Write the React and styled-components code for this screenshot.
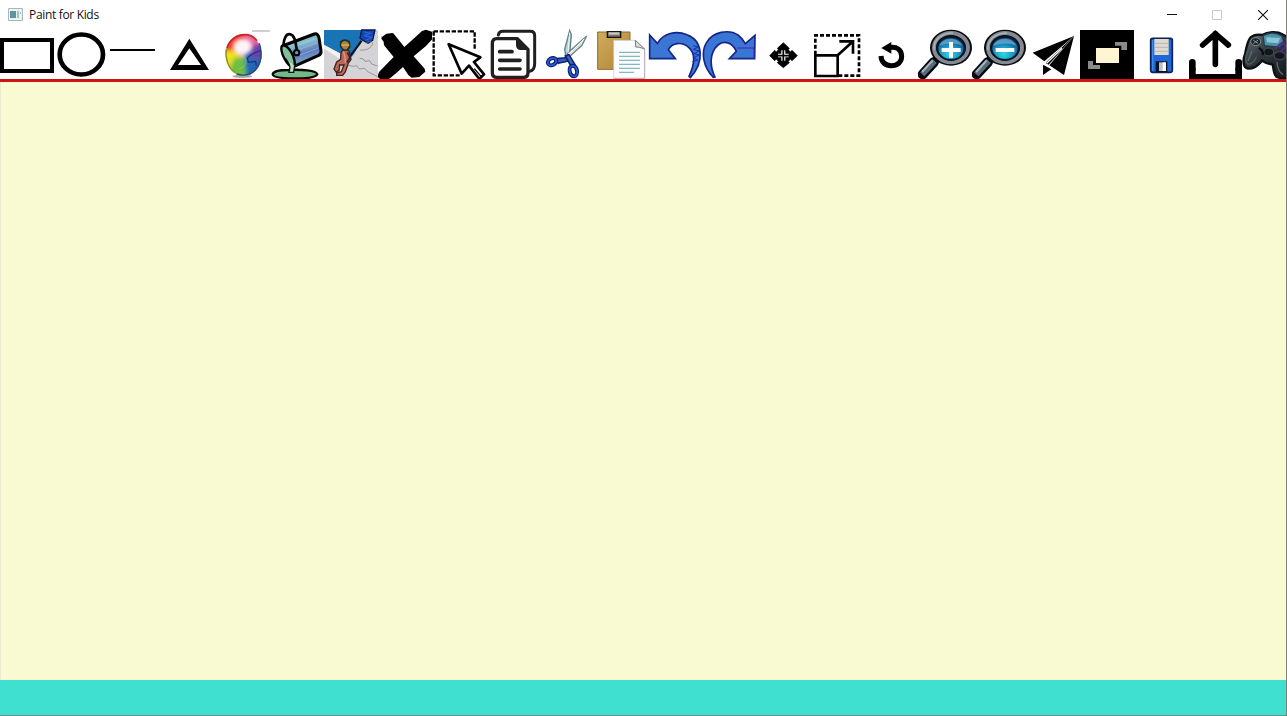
import React from "react";
import styled, { createGlobalStyle } from "styled-components";

const GlobalStyle = createGlobalStyle`
  html, body, #root { height: 100%; }
  body { margin: 0; overflow: hidden; background: #fff; }
  * { box-sizing: border-box; }
`;

const Window = styled.div`
  display: flex;
  flex-direction: column;
  width: 1287px;
  height: 716px;
  overflow: hidden;
  background: #fff;
  border-right: 1px solid #808078;
  border-bottom: 1px solid #6f8f88;
`;

const TitleBar = styled.header`
  display: flex;
  align-items: center;
  flex: none;
  height: 29px;
  padding-left: 8px;
`;

const Title = styled.h1`
  flex: 1;
  margin: 0 0 0 6px;
  font: 400 12px/28px "Open Sans", "Noto Sans", sans-serif;
  letter-spacing: -0.33px;
  color: #111;
`;

const AppIcon = styled.svg`
  width: 15px;
  height: 13px;
  flex: none;
`;

const WindowButton = styled.button`
  display: grid;
  place-items: center;
  width: ${(p) => p.$width || 45}px;
  height: 29px;
  padding: 0;
  border: 0;
  background: transparent;

  svg { display: block; }
`;

const Toolbar = styled.nav`
  display: flex;
  flex: none;
  height: 50px;
  overflow: hidden;
`;

const Tool = styled.button`
  flex: none;
  width: 54px;
  height: 50px;
  padding: 0;
  border: 0;
  background: transparent;

  svg { display: block; }
`;

const Divider = styled.div`
  flex: none;
  height: 3px;
  background: #d01414;
`;

const Canvas = styled.main`
  flex: 1;
  background: #f9f9d2;
  border-left: 1px solid #e9eccb;
`;

const StatusBar = styled.footer`
  flex: none;
  height: 35px;
  background: #40e0d0;
`;

function Magnifier({ id, plus }) {
  return (
    <>
      <defs>
        <radialGradient id={id} cx=".45" cy=".75" r=".75">
          <stop offset="0" stopColor="#2cd8e0" />
          <stop offset=".5" stopColor="#1b90c2" />
          <stop offset="1" stopColor="#12376e" />
        </radialGradient>
      </defs>
      <path d="M26 145 60 108" stroke="#070b10" strokeWidth="30" strokeLinecap="round" />
      <path d="M25 145 62 105" stroke="#596a7d" strokeWidth="17" />
      <path d="M24 138 56 103" stroke="#a7b5bf" strokeWidth="6" />
      <ellipse cx="111" cy="65" rx="63" ry="54" fill="#080c12" />
      <ellipse cx="111" cy="65" rx="51" ry="44" fill="none" stroke="#858a92" strokeWidth="12" />
      <path d="M60 72C57 39 84 21 117 21" fill="none" stroke="#adb1b8" strokeWidth="4" />
      <ellipse cx="111" cy="67" rx="41" ry="35" fill={`url(#${id})`} stroke="#0b1729" strokeWidth="6" />
      <path d="M77 59c5-22 51-32 68 0-20-9-45-8-68 0" fill="#75b9da" opacity=".65" />
      <path d={plus ? "M83 72h57M111 48v47" : "M83 72h56"} stroke="#fff" strokeWidth="12" />
    </>
  );
}

/* Glyphs are drawn on a grid of three units per pixel; x and y give the origin of each one. */
const tools = [
  {
    name: "Rectangle", x: 0, y: 87,
    art: <path fillRule="evenodd" d="M0 114h162v105H0zM12 126v81h138v-81z" />,
  },
  {
    name: "Circle", x: 162, y: 87,
    art: <ellipse cx="244" cy="163.5" rx="65" ry="60" fill="#fff" stroke="#000" strokeWidth="14" />,
  },
  {
    name: "Line", x: 324, y: 87,
    art: <path d="M330 150h135" stroke="#000" strokeWidth="6" />,
  },
  {
    name: "Triangle", x: 6, y: 9,
    art: <path fillRule="evenodd" d="M88 38 147 132H30ZM88 67 54 117h69Z" />,
  },
  {
    name: "Colours", x: 168, y: 9,
    art: (
      <>
        <defs>
          <clipPath id="ball"><ellipse cx="251" cy="87" rx="54" ry="63" /></clipPath>
          <filter id="mix" x="-.4" y="-.4" width="1.8" height="1.8"><feGaussianBlur stdDeviation="7" /></filter>
          <filter id="soft" x="-.4" y="-.4" width="1.8" height="1.8"><feGaussianBlur stdDeviation="6" /></filter>
        </defs>
        <path d="M276 15h54" stroke="#b9b5bd" strokeWidth="4" />
        <ellipse cx="247" cy="151" rx="30" ry="5" fill="#7d8a81" opacity=".7" />
        <g clipPath="url(#ball)">
          <path d="M195 20h115v135H195z" fill="#eba4c4" />
          <g filter="url(#mix)">
            <path d="M190 10h90l-10 26-35 14-20 45-30 5z" fill="#ed3a28" />
            <path d="M190 78c35-12 42 5 56 12l-18 55-41-12z" fill="#efe21c" />
            <path d="M222 96c35-10 50 12 44 60h-57c-5-23 3-39 13-60z" fill="#6cc043" />
            <path d="M253 84c28-25 60-13 64 9l-15 72h-42z" fill="#2368b5" />
            <path d="M282 40 315 48v53l-45-5z" fill="#6e3fa8" />
            <path d="M240 18h45l25 32-30 8z" fill="#e56797" />
          </g>
          <ellipse cx="246" cy="62" rx="27" ry="24" fill="#fff" opacity=".9" filter="url(#soft)" />
        </g>
        <path d="M201 66c6-24 29-40 54-40 16 0 28 8 36 18" fill="none" stroke="#d0202a" strokeWidth="5" />
        <path d="M199 68c-5 27 6 58 26 72" fill="none" stroke="#8e951c" strokeWidth="4" />
        <path d="M298 52c12 36 3 76-26 90-13 6-27 7-42 2" fill="none" stroke="#24506a" strokeWidth="4" />
        <path d="M302 73c-18 7-34 14-40 24l3 12 22-3 2 13" fill="none" stroke="#20338b" strokeWidth="4" />
        <path d="M214 112c8-20 26-27 41-17 8 12 0 29-17 33" fill="none" stroke="#bddc62" strokeWidth="2" opacity=".7" />
      </>
    ),
  },
  {
    name: "Fill", x: 6, y: 9,
    art: (
      <>
        <defs>
          <linearGradient id="pail" x1=".3" y1="0" x2=".65" y2="1">
            <stop offset="0" stopColor="#3f7a84" /><stop offset=".3" stopColor="#8cc6d2" />
            <stop offset=".6" stopColor="#6177bd" /><stop offset="1" stopColor="#82c4c4" />
          </linearGradient>
        </defs>
        <path d="M14 145c2-12 26-13 48-13 36-2 83 1 86 13-5 10-38 13-72 12-34 0-61-2-62-12z" fill="#74b98a" stroke="#040a06" strokeWidth="7" />
        <path d="M43 60 139 24c8-2 12 3 14 12l6 38c1 7-1 11-7 14L78 121z" fill="url(#pail)" stroke="#020404" strokeWidth="9" strokeLinejoin="round" />
        <path d="M44 59c-8 3-3 24 5 38 8 15 19 27 28 24 7-5 2-25-6-40-8-14-18-25-27-22z" fill="#82bf9c" stroke="#020404" strokeWidth="7" />
        <path d="M53 98c6 8 12 16 13 26l-3 15h14l3-20" fill="#b6e0bd" stroke="#08100b" strokeWidth="4" />
        <path d="m84 60 54-20M89 72l60-22M95 87l56-21" stroke="#a3d2db" strokeWidth="3" opacity=".55" />
        <path d="M46 58C48 38 54 22 67 25c15 4 16 27 19 45" fill="none" stroke="#050608" strokeWidth="8" />
        <circle cx="86" cy="80" r="8" fill="#719aa2" stroke="#000" strokeWidth="6" />
      </>
    ),
  },
  {
    name: "Draw", x: 168, y: 9,
    art: (
      <>
        <path d="M168 12h162v147H168z" fill="#d4d4d6" />
        <path d="M168 12h114l-2 30-22 42-12 14-78-42z" fill="#1974b6" />
        <path d="m168 57 50 26 24 11-2 8-24-4-48-30z" fill="#f2f2ef" />
        <path d="M237 104c14-22 29-37 44-60" stroke="#10101b" strokeWidth="6" fill="none" />
        <path d="M281 12h40l-7 31-14 9-17-10-7-6z" fill="#1743b5" stroke="#08194a" strokeWidth="4" />
        <path d="m286 17 22 5-20 7 25 5-20 9" fill="none" stroke="#2873d2" strokeWidth="3" />
        <path d="M294 51c20-12 27 3 10 15-8 7-18 6-28 6M275 97l11 2 5 7 14-2 6 10 17 6M240 118l16 3 10-2 8 10 16-2 9 10 30 15" fill="none" stroke="#77777d" strokeWidth="2" />
        <path d="M224 72c-7 6-6 18-6 28l-12 8-8 21 6 9 9-4 2-17 13 0-8 20-14 4v7h18l8-10 9-27 8-10-5-24-7-7z" fill="#b66a5a" stroke="#48201f" strokeWidth="4" />
        <path d="m226 77 5 16 1 17" fill="none" stroke="#e09a7b" strokeWidth="4" />
        <path d="m238 79 8 16-9 14" fill="none" stroke="#242233" strokeWidth="5" />
        <path d="M218 48q13-11 26 0l1 14-7 10h-12l-8-10z" fill="#a38542" stroke="#202c29" strokeWidth="5" />
        <path d="M220 57h24" stroke="#e7a441" strokeWidth="5" />
      </>
    ),
  },
  {
    name: "Delete", x: 6, y: 9,
    art: (
      <path d="M18 33 31 23l20-2 7 8 27 34 31-28 22-20 12-4 20 7 6 5-3 12-24 26-36 30 33 37 2 9-9 8-9 8-23 2-10-8-16-24-20 18-24 20-13 1-16-5-3-7 4-12 27-28 17-17-29-35-1-11-7-9 2-9z" strokeLinejoin="round" />
    ),
  },
  {
    name: "Select", x: 168, y: 9,
    art: (
      <>
        <path d="M173 16h123v52M173 16v132h78" fill="none" stroke="#000" strokeWidth="7" strokeDasharray="13 5" />
        <path d="m218 55 95 39-19 14 30 37-14 14-31-40-22 24z" fill="#fff" stroke="#000" strokeWidth="8" strokeLinejoin="round" />
        <path d="m295 128 20 23" stroke="#000" strokeWidth="4" />
      </>
    ),
  },
  {
    name: "Copy", x: 6, y: 9,
    art: (
      <g fill="none" stroke="#202022" strokeLinejoin="round" strokeLinecap="round">
        <path d="M43 27q2-11 14-11h82q13 0 13 13v84q0 19-15 23" strokeWidth="9" />
        <path d="M38 38h62l32 32v70q0 14-14 14H39q-14 0-14-14V53q0-15 13-15z" fill="#fff" strokeWidth="10" />
        <path d="M99 40v17q0 12 12 12h20z" fill="#202022" strokeWidth="6" />
        <path d="M47 77h37M47 103h61M47 129h61" strokeWidth="11" />
      </g>
    ),
  },
  {
    name: "Cut", x: 168, y: 9,
    art: (
      <>
        <path d="m257 14 5 12-5 60-11 7-4-23z" fill="#b7d4dc" stroke="#5c8188" strokeWidth="4" />
        <path d="m308 30-14 28-42 38-2-14z" fill="#dbe4e6" stroke="#71848a" strokeWidth="4" />
        <path d="M215 98c12-2 22 1 36-6l9 9c-17 11-25 5-37 11z" fill="#3560c0" stroke="#102270" strokeWidth="5" />
        <path d="m244 90 11-4 18 30-11 6z" fill="#3c69c8" stroke="#102270" strokeWidth="5" />
        <ellipse cx="204" cy="107" rx="13" ry="10" transform="rotate(-30 204 107)" fill="#fff" stroke="#0c1f7c" strokeWidth="12" />
        <ellipse cx="204" cy="107" rx="13" ry="10" transform="rotate(-30 204 107)" fill="none" stroke="#2f5fd0" strokeWidth="5" />
        <ellipse cx="268" cy="135" rx="11" ry="16" transform="rotate(-12 268 135)" fill="#fff" stroke="#0c1f7c" strokeWidth="12" />
        <ellipse cx="268" cy="135" rx="11" ry="16" transform="rotate(-12 268 135)" fill="none" stroke="#2f5fd0" strokeWidth="5" />
        <path d="m257 20-5 60m3 4 46-46" stroke="#f4f8f8" strokeWidth="3" />
      </>
    ),
  },
  {
    name: "Paste", x: 6, y: 9,
    art: (
      <>
        <defs><linearGradient id="board" x2="1" y2="1"><stop stopColor="#d0ac5c" /><stop offset="1" stopColor="#b08438" /></linearGradient></defs>
        <path d="M17 18h97v112H17z" fill="url(#board)" stroke="#8f6a29" strokeWidth="3" />
        <path d="M46 17h40v17H46z" fill="#77716a" stroke="#151515" strokeWidth="4" />
        <path d="M50 19h32v7H50z" fill="#c9c9c8" />
        <path d="M65 43h66l27 26v88H65z" fill="#fafcfe" stroke="#c6c6d0" strokeWidth="2" />
        <path d="m130 43 1 20q11-1 27 6z" fill="#ddddde" stroke="#817c80" strokeWidth="3" />
        <path d="M158 69v88H65" fill="none" stroke="#a396a3" strokeWidth="2" />
        <path d="M81 79h63M81 91h63M81 103h63M81 115h63M81 127h63M81 139h45" stroke="#86b9bf" strokeWidth="4" />
      </>
    ),
  },
  {
    name: "Undo", x: 168, y: 9,
    art: (
      <>
        <path d="m173 27 23 25c18-31 56-39 89-26 49 18 53 83 10 129l-4-4c17-37 19-70-1-87-20-18-50-14-61 7l21 27h-77z" fill="#3b76d4" stroke="#12258c" strokeWidth="5" />
        <path d="m303 59 16 4-15 7 17 5-15 8 15 4-16 8 12 7-16 5" fill="none" stroke="#1830ae" strokeWidth="3" />
      </>
    ),
  },
  {
    name: "Redo", x: 6, y: 9,
    art: (
      <>
        <path d="m165 28-1 70H88l21-22C97 49 72 42 54 57 29 79 28 119 45 153l-5 1C9 123 2 78 20 49 38 18 86 8 114 27c10 7 15 14 22 26z" fill="#3976d4" stroke="#172488" strokeWidth="5" />
        <path d="M112 66h50v29" fill="none" stroke="#4e1ac0" strokeWidth="3" />
      </>
    ),
  },
  {
    name: "Move", x: 168, y: 9,
    art: (
      <>
        <path d="m250 50 18 17-3 4 6 7 5-5 16 16-16 15-5-5-6 7 3 4-18 15-18-15 3-4-6-7-5 5-15-15 15-16 5 5 6-7-3-4z" stroke="#000" strokeWidth="2" />
        <path d="M244 73v10h-10v11h10v10h12V94h10V83h-10V73z" fill="#fff" />
        <path d="M250 72v34M233 89h34" stroke="#000" strokeWidth="5" />
      </>
    ),
  },
  {
    name: "Resize", x: 6, y: 9,
    art: (
      <g fill="none" stroke="#000">
        <path d="M22 86V28h131v121H91" strokeWidth="8" strokeDasharray="12 6" />
        <path d="M22 88h67v62H22z" fill="#fff" strokeWidth="8" />
        <path d="m90 87 46-42M94 46h41v37" strokeWidth="8" />
      </g>
    ),
  },
  {
    name: "Rotate", x: 168, y: 9,
    art: (
      <>
        <path d="M244 65C266 60 281 72 281 91c0 18-13 28-31 28-19 0-30-11-31-29" fill="none" stroke="#000" strokeWidth="15" />
        <path d="m220 66 30-18v35z" />
      </>
    ),
  },
  { name: "Zoom in", x: 12, y: 9, art: <Magnifier id="lens-in" plus /> },
  {
    name: "Zoom out", x: 174, y: 9,
    art: <g transform="translate(162)"><Magnifier id="lens-out" /></g>,
  },
  {
    name: "Send to back", x: 0, y: 9,
    art: (
      <>
        <path d="M144 30 20 80l35 26zM144 30 70 118l44 29zM51 116v31l25-17z" />
        <path d="m144 30-82 77-2 5 8 4z" />
        <path d="m62 112 46-45" stroke="#fff" strokeWidth="4" />
      </>
    ),
  },
  {
    name: "Bring to front", x: 162, y: 9,
    art: (
      <>
        <path d="M162 12h162v147H162z" />
        <path d="M267 48h36v24h-17V59h-19zM186 105h15v12h21v12h-36z" fill="#8a8a8a" />
        <path d="M210 66h69v45h-69z" fill="#fff5d2" />
      </>
    ),
  },
  {
    name: "Save", x: 0, y: 87,
    art: (
      <>
        <rect x="50" y="115" width="65" height="102" rx="6" fill="#1f66d6" stroke="#0c2258" strokeWidth="5" />
        <path d="M56 120v92" stroke="#3b8cf0" strokeWidth="4" />
        <path d="M61 117h43v48H61z" fill="#dedad0" />
        <path d="M62 130h41M62 142h41M62 154h41" stroke="#b9b5ac" strokeWidth="3" />
        <path d="M65 184h35v32H65z" fill="#0b1226" />
        <path d="M75 187h21v26H75z" fill="#b9bfce" /><path d="M86 187h10v26H86z" fill="#fff" />
      </>
    ),
  },
  {
    name: "Load", x: 162, y: 87,
    art: (
      <g fill="none" stroke="#000">
        <path d="M244 193V101M206 135l38-34 39 34" strokeWidth="17" strokeLinecap="round" />
        <path d="M175 187v20M314 187v20" strokeWidth="20" strokeLinecap="round" />
        <path d="M165 205v32h159v-32h-20v17H185v-17z" fill="#000" stroke="none" />
      </g>
    ),
  },
  {
    name: "Play", x: 324, y: 87,
    art: (
      <>
        <defs><linearGradient id="pad" x2=".7" y2="1"><stop stopColor="#6d7681" /><stop offset=".5" stopColor="#30373d" /><stop offset="1" stopColor="#171d22" /></linearGradient></defs>
        <path d="M349 113c12-11 26-10 36-8 15-10 45-12 60-2l29 15v116c-16 2-37 4-48-5-8-9-7-24-10-35-12-2-23-6-32-12-10 13-22 24-42 24-16-4-16-27-9-43 4-20 6-38 16-50z" fill="url(#pad)" stroke="#0b1015" strokeWidth="7" />
        <path d="M387 107q30-16 56 0l8 22-13 13-47-5z" fill="#4e90a8" stroke="#27394d" strokeWidth="4" />
        <path d="m396 112 42 2-6 16-33-3z" fill="#86c8d8" />
        <ellipse cx="365" cy="125" rx="15" ry="12" fill="#1d252b" stroke="#878e94" strokeWidth="3" />
        <path d="m358 121 14 9m0-10-14 11" stroke="#8c9298" strokeWidth="3" />
        <ellipse cx="404" cy="156" rx="15" ry="12" fill="#101619" stroke="#3c4a48" strokeWidth="4" />
        <ellipse cx="437" cy="167" rx="17" ry="12" fill="#11171f" stroke="#494050" strokeWidth="4" />
        <path d="m423 146 23-19 10 11-16 18" fill="none" stroke="#55278c" strokeWidth="6" />
        <path d="M342 151c-8 15-10 33-1 41 12 2 23-13 27-22" fill="none" stroke="#50605a" strokeWidth="4" />
        <path d="M354 153 342 183M429 185c1 17 4 31 18 39" fill="none" stroke="#606a6b" strokeWidth="4" />
        <path d="M374 143q14 8 13 22" fill="none" stroke="#090e11" strokeWidth="7" />
      </>
    ),
  },
];

export default function App() {
  return (
    <>
      <GlobalStyle />
      <Window>
        <TitleBar>
          <AppIcon viewBox="0 0 15 13" aria-hidden="true">
            <path d="M.5.5h14v12H.5z" fill="#edf2f2" stroke="#a9b8ba" />
            <path d="M2 3h6v7H2z" fill="#5d9698" />
            <path d="M9 3h2v7H9z" fill="#a6c0c0" />
            <path d="M12.5 4v2" stroke="#a7b5b6" />
          </AppIcon>
          <Title>Paint for Kids</Title>
          <WindowButton aria-label="Minimize" $width={44}>
            <svg width="10" height="10" viewBox="0 0 10 10"><path d="M0 4.5h10" stroke="#111" /></svg>
          </WindowButton>
          <WindowButton aria-label="Maximize" disabled $width={46}>
            <svg width="10" height="10" viewBox="0 0 10 10"><path d="M.5.5h9v9h-9z" fill="none" stroke="#c9c9c9" /></svg>
          </WindowButton>
          <WindowButton aria-label="Close" $width={46}>
            <svg width="10" height="10" viewBox="0 0 10 10"><path d="m0 0 10 10m0-10L0 10" stroke="#111" strokeWidth="1.1" /></svg>
          </WindowButton>
        </TitleBar>
        <Toolbar>
          {tools.map((tool) => (
            <Tool key={tool.name} aria-label={tool.name}>
              <svg width="54" height="50" viewBox={`${tool.x} ${tool.y} 162 150`}>{tool.art}</svg>
            </Tool>
          ))}
        </Toolbar>
        <Divider />
        <Canvas />
        <StatusBar />
      </Window>
    </>
  );
}
